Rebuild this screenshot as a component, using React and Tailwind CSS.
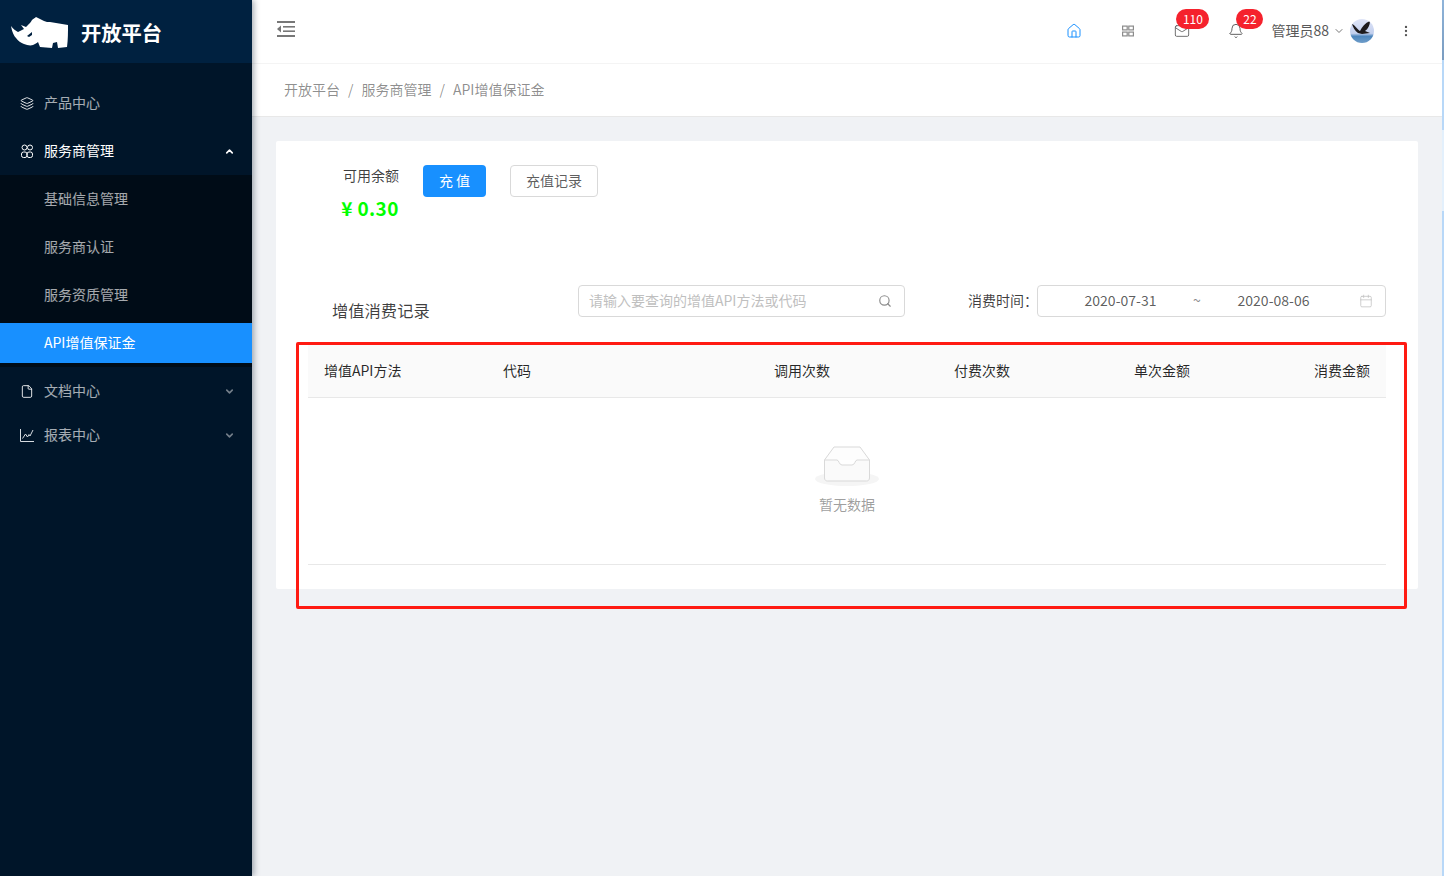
import React from 'react';
import { Layers, ChevronUp, ChevronDown, File, Search, Calendar, Home, Mail, Bell, MoreVertical } from 'lucide-react';

const subItems = ['基础信息管理', '服务商认证', '服务资质管理', 'API增值保证金'];
const columns = [
  { label: '增值API方法', cls: 'text-left' },
  { label: '代码', cls: 'text-left' },
  { label: '调用次数', cls: 'text-right' },
  { label: '付费次数', cls: 'text-right' },
  { label: '单次金额', cls: 'text-right' },
  { label: '消费金额', cls: 'text-right' },
];

function RhinoLogo() {
  return (
    <svg width="60" height="34" viewBox="0 0 60 34" className="shrink-0 mt-[3px]">
      <path
        fill="#fff"
        d="M1 10 C2 16 4 20 6 22 C8 25 11 27 14 28 C17 29 20 30 23 29 C25 28 27 27 28 26 L30 31 L42 32 L43 27 L47 26 L48 32 L57 31 C58 24 58 16 58 9 C52 8 46 7 40 6 C38 6 36 6 34 5 L26 1 C25 2 23 3 22 4 C21 6 19 8 18 9 L16 11 L11 9 L14 13 L8 16 C6 15 3 13 1 10 Z"
      />
      <path fill="#002140" d="M17 20 L22 16 L22 19 L19 21 Z" />
    </svg>
  );
}

function PeopleIcon() {
  return (
    <svg width="14" height="14" viewBox="0 0 14 14" fill="none" stroke="#fff" strokeWidth="1" className="shrink-0">
      <circle cx="4.5" cy="3.5" r="2.5" />
      <circle cx="10" cy="3.5" r="2.5" />
      <rect x="1.5" y="8" width="5.5" height="5.5" rx="2" />
      <rect x="7" y="8" width="5.5" height="5.5" rx="2" />
    </svg>
  );
}

function ChartIcon() {
  return (
    <svg width="14" height="14" viewBox="0 0 14 14" fill="none" stroke="#d6dbe0" strokeWidth="1" className="shrink-0">
      <path d="M0.5 1 V13.5 H14" />
      <path d="M2.5 10.5 L5.5 6 L7.5 9 L9 6.5 L10 8 L13 2" />
    </svg>
  );
}

function CollapseIcon() {
  return (
    <svg width="18" height="16" viewBox="0 0 18 16" fill="#777" className="shrink-0 -mt-[6px]">
      <rect x="0" y="0" width="18" height="2" />
      <rect x="6" y="5" width="12" height="1.6" />
      <rect x="6" y="9.4" width="12" height="1.6" />
      <rect x="0" y="14" width="18" height="2" />
      <path d="M4 4.5 V11.5 L0 8 Z" />
    </svg>
  );
}

function AppsIcon() {
  return (
    <svg width="14" height="14" viewBox="0 0 14 14" fill="none" stroke="#8c8c8c" strokeWidth="1.2">
      <rect x="1.6" y="2.1" width="4.6" height="3.8" />
      <rect x="7.8" y="2.1" width="4.6" height="3.8" />
      <rect x="1.6" y="8.1" width="4.6" height="3.8" />
      <rect x="7.8" y="8.1" width="4.6" height="3.8" />
    </svg>
  );
}

function Eagle() {
  return (
    <svg width="24" height="24" viewBox="0 0 24 24" className="rounded-full">
      <defs>
        <linearGradient id="sky" x1="0" y1="0" x2="0" y2="1">
          <stop offset="0" stopColor="#dfe4f7" />
          <stop offset="0.6" stopColor="#c3d0ee" />
          <stop offset="0.72" stopColor="#4d86bd" />
          <stop offset="1" stopColor="#6f9dc9" />
        </linearGradient>
      </defs>
      <rect width="24" height="24" fill="url(#sky)" />
      <path fill="#1d1a1c" d="M2 5 C5 6 7 10 10 12 C12 8 15 4 20 2 C20 6 18 10 15 12 L20 14 L12 15 L8 14 C5 12 3 8 2 5 Z" />
    </svg>
  );
}

function EmptyBox() {
  return (
    <svg width="64" height="41" viewBox="0 0 64 41">
      <ellipse cx="32" cy="33" rx="32" ry="7" fill="#f5f5f5" />
      <g fill="none" stroke="#d9d9d9" strokeWidth="1">
        <path d="M9.5 14 L19 1 H45 L54.5 14" fill="#fdfdfd" />
        <path fill="#fafafa" d="M9.5 14 H22 C24 14 24 19 27 19 H37 C40 19 40 14 42 14 H54.5 V32 C54.5 34 53 35 51.5 35 H12.5 C11 35 9.5 34 9.5 32 Z" />
      </g>
    </svg>
  );
}

function Badge({ children, className }) {
  return (
    <span className={`absolute h-5 rounded-full bg-[#f5222d] text-white text-xs leading-5 text-center ${className}`}>
      {children}
    </span>
  );
}

function MenuItem({ icon, label, active, arrow }) {
  return (
    <div className={`h-10 flex items-center pl-5 pr-[17px] ${active ? 'text-white' : 'text-white/65'}`}>
      <span className="w-[14px] flex justify-center shrink-0 text-white">{icon}</span>
      <span className="ml-[10px] flex-1 text-sm pb-0.5">{label}</span>
      {arrow}
    </div>
  );
}

export default function App() {
  return (
    <div className="relative flex w-[1444px] h-[876px] overflow-hidden bg-[#f0f2f5] text-sm font-['Noto_Sans_CJK_SC','Noto_Sans',sans-serif]">
      {/* Sidebar */}
      <aside className="relative z-10 w-[252px] shrink-0 bg-[#001529] shadow-[2px_0_6px_rgba(0,21,41,0.35)]">
        <div className="h-[63px] bg-[#002140] flex items-center pl-[10px]">
          <RhinoLogo />
          <span className="ml-[11px] mt-[2px] text-white text-[20.3px] font-bold">开放平台</span>
        </div>
        <nav className="pt-5">
          <MenuItem icon={<Layers size={15} strokeWidth={1.5} />} label="产品中心" />
          <div className="mt-2">
            <MenuItem
              active
              icon={<PeopleIcon />}
              label="服务商管理"
              arrow={<ChevronUp size={11} strokeWidth={3.5} className="text-white" />}
            />
          </div>
          <div className="mt-[4px] bg-[#000c17] pt-1 pb-1 flex flex-col gap-2">
            {subItems.map((item, i) => (
              <div
                key={item}
                className={`h-10 flex items-center pl-11 pb-0.5 text-sm ${i === 3 ? 'bg-[#1890ff] text-white' : 'text-white/65'}`}
              >
                {item}
              </div>
            ))}
          </div>
          <div className="mt-1 flex flex-col gap-1">
            <MenuItem
              icon={<File size={15} strokeWidth={1.5} />}
              label="文档中心"
              arrow={<ChevronDown size={11} strokeWidth={3.5} className="text-white/45" />}
            />
            <MenuItem
              icon={<ChartIcon />}
              label="报表中心"
              arrow={<ChevronDown size={11} strokeWidth={3.5} className="text-white/45" />}
            />
          </div>
        </nav>
      </aside>

      {/* Main */}
      <div className="flex-1 min-w-0 flex flex-col">
        <header className="h-[64px] bg-white flex items-center pl-[25px] pr-[31px] border-b border-[#f4f4f4]">
          <CollapseIcon />
          <div className="ml-auto flex items-center text-[#595959]">
            <Home size={16} strokeWidth={1.5} className="text-[#1890ff] -mt-[2px]" />
            <span className="ml-[39px] -mt-[2px]"><AppsIcon /></span>
            <span className="relative ml-[39px] -mt-[2px]">
              <Mail size={16} strokeWidth={1.4} className="text-[#666]" />
              <Badge className="w-[33px] -top-[14px] left-[2px]">110</Badge>
            </span>
            <span className="relative ml-[38px] -mt-[2px]">
              <Bell size={16} strokeWidth={1.4} className="text-[#555]" />
              <Badge className="w-[27px] -top-[14px] left-[8px]">22</Badge>
            </span>
            <span className="ml-[27px] pb-1">管理员88</span>
            <ChevronDown size={12} className="ml-[4px] -mt-[2px] text-[#777]" />
            <span className="ml-[5px] -mt-[2px] flex"><Eagle /></span>
            <MoreVertical size={14} className="ml-[25px] -mt-[2px] text-[#555]" />
          </div>
        </header>

        <div className="h-[53px] bg-white border-b border-[#e8e8e8] flex items-center pl-8 pb-0.5 text-[#00000073]">
          <span>开放平台</span>
          <span className="mx-2">/</span>
          <span>服务商管理</span>
          <span className="mx-2">/</span>
          <span>API增值保证金</span>
        </div>

        <main className="pt-6 pl-6 pr-[26px]">
          <section className="bg-white rounded-[2px] h-[448px]">
            {/* Balance */}
            <div className="flex pt-6 pl-[65px] h-[144px]">
              <div className="flex flex-col items-center w-[60px] -mt-px">
                <span className="text-[#000000bf] leading-[22px]">可用余额</span>
                <span className="mt-[8px] pr-[2px] text-[#00ff00] text-[19px] tracking-[0.35px] leading-7 font-bold whitespace-nowrap">¥ 0.30</span>
              </div>
              <button className="ml-[22px] w-[63px] h-8 pb-0.5 rounded bg-[#1890ff] text-white">充 值</button>
              <button className="ml-6 w-[88px] h-8 pb-0.5 rounded border border-[#d9d9d9] text-[#000000a6] bg-white">充值记录</button>
            </div>

            {/* Filters */}
            <div className="flex items-start pl-[56px] pr-[32px] h-[58px]">
              <span className="text-[16.3px] text-[#000000bf] w-[246px] mt-[13px] leading-6">增值消费记录</span>
              <div className="w-[327px] h-8 rounded border border-[#d9d9d9] flex items-center pl-[10px] pr-[12px] text-[#bfbfbf]">
                <span className="flex-1 pb-0.5">请输入要查询的增值API方法或代码</span>
                <Search size={14} className="text-[#8c8c8c]" />
              </div>
              <span className="ml-[63px] h-8 leading-[30px] w-[69px] text-[#000000bf] whitespace-nowrap">消费时间：</span>
              <div className="w-[349px] h-8 rounded border border-[#d9d9d9] flex items-center text-[#000000a6]">
                <span className="ml-[6px] w-[153px] shrink-0 text-center pb-0.5">2020-07-31</span>
                <span className="w-0 shrink-0 flex justify-center text-[#8c8c8c] pb-0.5">~</span>
                <span className="w-[153px] shrink-0 text-center pb-0.5">2020-08-06</span>
                <Calendar size={14} strokeWidth={1.3} className="shrink-0 ml-auto mr-[12px] text-[#bfbfbf]" />
              </div>
            </div>

            {/* Table */}
            <div className="mx-8 mt-[2px]">
              <div className="grid grid-cols-[179px_179px_180px_180px_180px_180px] h-[53px] pb-[3px] items-center bg-[#fafafa] border-b border-[#e8e8e8] text-[#000000d9]">
                {columns.map((col) => (
                  <span key={col.label} className={`px-4 ${col.cls}`}>{col.label}</span>
                ))}
              </div>
              <div className="h-[167px] border-b border-[#e8e8e8] flex flex-col items-center pt-[48px]">
                <EmptyBox />
                <span className="mt-[7px] text-[#00000066]">暂无数据</span>
              </div>
            </div>
          </section>
        </main>
      </div>

      {/* Red highlight drawn over the table */}
      <div className="absolute left-[296px] top-[342px] w-[1111px] h-[267px] border-[3px] border-[#ff1a12] rounded-[2px] pointer-events-none" />

      {/* Sliver of the window behind, along the right edge */}
      <div className="absolute right-0 top-0 bottom-0 w-[2px] flex flex-col">
        <div className="h-[60px] bg-gradient-to-b from-[#8fb4da] to-[#7a9cc0]" />
        <div className="h-[70px] bg-[#b8d8f8]" />
        <div className="h-[81px] bg-[#e3f0fc]" />
        <div className="flex-1 bg-[#b8d8f8]" />
      </div>
    </div>
  );
}
